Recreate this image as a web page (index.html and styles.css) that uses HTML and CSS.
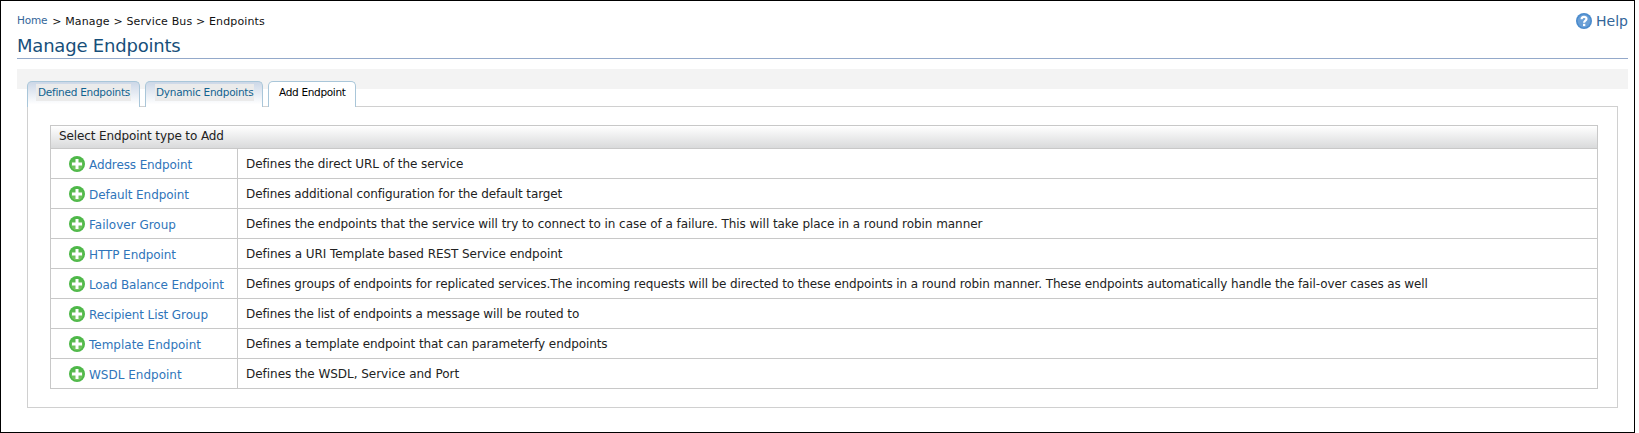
FILE: index.html
```
<!DOCTYPE html>
<html lang="en">
<head>
<meta charset="utf-8">
<title>Manage Endpoints</title>
<link rel="stylesheet" href="styles.css">
</head>
<body>
<svg width="0" height="0" class="defs">
  <defs>
    <linearGradient id="green" x1="0" y1="0" x2="0" y2="1">
      <stop offset="0" stop-color="#4fb548"/><stop offset="1" stop-color="#7ac763"/>
    </linearGradient>
    <symbol id="add" viewBox="0 0 16 16">
      <circle cx="8" cy="8" r="8" fill="#4db848"/>
      <circle cx="8" cy="8" r="6.3" fill="url(#green)"/>
      <path d="M6.500 3h3v3.500H13v3H9.500V13h-3V9.500H3v-3h3.500z" fill="#fff"/>
    </symbol>
  </defs>
</svg>
<div class="page">
  <div class="top">
    <nav class="crumbs"><a class="home">Home</a><span class="path">&gt; Manage &gt; Service Bus &gt; Endpoints</span></nav>
    <a class="help"><svg width="16" height="16" viewBox="0 0 16 16"><circle cx="8" cy="8" r="8" fill="#4a8bcd"/><circle cx="8" cy="8" r="6.400" fill="#6a9fd6"/><path d="M5.600 6.200C5.600 3.200 10.500 3.200 10.500 6C10.500 7.700 8.100 7.700 8.100 9.700" fill="none" stroke="#fff" stroke-width="2.200"/><rect x="7" y="10.800" width="2.300" height="2.300" fill="#fff"/></svg><span>Help</span></a>
  </div>
  <h1 class="title">Manage Endpoints</h1>
  <div class="band">
    <ul class="tabs">
      <li class="tab tab-defined"><span class="label">Defined Endpoints</span></li>
      <li class="tab tab-dynamic"><span class="label">Dynamic Endpoints</span></li>
      <li class="tab tab-add active"><span class="label">Add Endpoint</span></li>
    </ul>
  </div>
  <div class="panel">
    <div class="table">
      <div class="head">Select Endpoint type to Add</div>
      <div class="row address"><a class="name"><svg class="icon"><use href="#add"/></svg><span>Address Endpoint</span></a><div class="desc">Defines the direct URL of the service</div></div>
      <div class="row default"><a class="name"><svg class="icon"><use href="#add"/></svg><span>Default Endpoint</span></a><div class="desc">Defines additional configuration for the default target</div></div>
      <div class="row failover"><a class="name"><svg class="icon"><use href="#add"/></svg><span>Failover Group</span></a><div class="desc">Defines the endpoints that the service will try to connect to in case of a failure. This will take place in a round robin manner</div></div>
      <div class="row http"><a class="name"><svg class="icon"><use href="#add"/></svg><span>HTTP Endpoint</span></a><div class="desc">Defines a URI Template based REST Service endpoint</div></div>
      <div class="row balance"><a class="name"><svg class="icon"><use href="#add"/></svg><span>Load Balance Endpoint</span></a><div class="desc">Defines groups of endpoints for replicated services.The incoming requests will be directed to these endpoints in a round robin manner. These endpoints automatically handle the fail-over cases as well</div></div>
      <div class="row recipient"><a class="name"><svg class="icon"><use href="#add"/></svg><span>Recipient List Group</span></a><div class="desc">Defines the list of endpoints a message will be routed to</div></div>
      <div class="row template"><a class="name"><svg class="icon"><use href="#add"/></svg><span>Template Endpoint</span></a><div class="desc">Defines a template endpoint that can parameterfy endpoints</div></div>
      <div class="row wsdl"><a class="name"><svg class="icon"><use href="#add"/></svg><span>WSDL Endpoint</span></a><div class="desc">Defines the WSDL, Service and Port</div></div>
    </div>
  </div>
</div>
</body>
</html>
```
FILE: styles.css
```
* { box-sizing: border-box; }
html, body { height: 433px; overflow: hidden; }
body { margin: 0; background: #fff; font-family: "DejaVu Sans", Verdana, sans-serif; font-size: 12px; color: #222; }
.defs { position: absolute; }
.page { width: 1635px; height: 433px; border: 1px solid #000; padding: 0 6px 0 16px; }
.top { height: 33px; display: flex; justify-content: space-between; }
.crumbs { display: flex; gap: 5px; font-size: 11px; line-height: 15px; color: #111; }
.home { padding-top: 12px; font-size: 10.500px; letter-spacing: -0.2px; color: #336699; }
.path { padding-top: 13px; letter-spacing: 0.14px; }
.help { display: flex; gap: 4px; padding-top: 12px; font-size: 14px; line-height: 16px; color: #336699; }
.title { margin: 0; height: 25px; border-bottom: 1px solid #94a9ca; font-size: 18px; font-weight: 400; line-height: 23px; letter-spacing: -0.2px; color: #174f7a; }
.band { height: 20px; margin-top: 10px; background: #f3f3f3; padding: 12px 0 0 10px; }
.tabs { margin: 0; padding: 0; list-style: none; display: flex; gap: 5px; height: 26px; }
.tab { height: 26px; border: 1px solid #a9c6d9; border-bottom: 0; border-radius: 5px 5px 0 0; background: linear-gradient(#ccd7e7, #fff 90%); padding: 2px 8px 0; font-size: 10.500px; letter-spacing: -0.26px; color: #126390; position: relative; z-index: 1; white-space: nowrap; }
.label { display: block; height: 17px; line-height: 17px; padding-left: 2px; background: #ebebeb; }
.tab-defined { width: 113px; }
.tab-dynamic { width: 118px; padding-left: 9px; }
.tab-dynamic .label { padding-left: 1px; }
.tab-add { width: 88px; letter-spacing: -0.32px; }
.active { background: #fff; color: #000; }
.active .label { background: none; }
.panel { width: 1591px; height: 302px; margin: 17px 0 0 10px; border: 1px solid #d0d0d0; padding: 18px 19px 0 22px; }
.table { width: 1548px; border: 1px solid #c8c8c8; white-space: nowrap; }
.head { height: 22px; background: linear-gradient(#fff, #d9dadb); padding-left: 8px; line-height: 20px; letter-spacing: -0.11px; }
.row { height: 30px; display: flex; border-top: 1px solid #c8c8c8; }
.name { width: 187px; border-right: 1px solid #c8c8c8; padding: 7px 0 0 18px; display: flex; gap: 4px; color: #2f75ba; line-height: 18px; }
.icon { width: 16px; height: 16px; }
.desc { padding: 6px 0 0 8px; line-height: 18px; }
.address .name { letter-spacing: -0.12px; }
.address .desc { letter-spacing: -0.08px; }
.default .name { letter-spacing: -0.07px; }
.default .desc { letter-spacing: -0.114px; }
.failover .desc { letter-spacing: -0.057px; }
.http .name { letter-spacing: -0.08px; }
.http .desc { letter-spacing: -0.063px; }
.balance .name { letter-spacing: -0.14px; }
.balance .desc { letter-spacing: -0.111px; }
.recipient .name { letter-spacing: -0.1px; }
.recipient .desc { letter-spacing: -0.11px; }
.template .desc { letter-spacing: -0.09px; }
.wsdl .desc { letter-spacing: -0.03px; }
```
